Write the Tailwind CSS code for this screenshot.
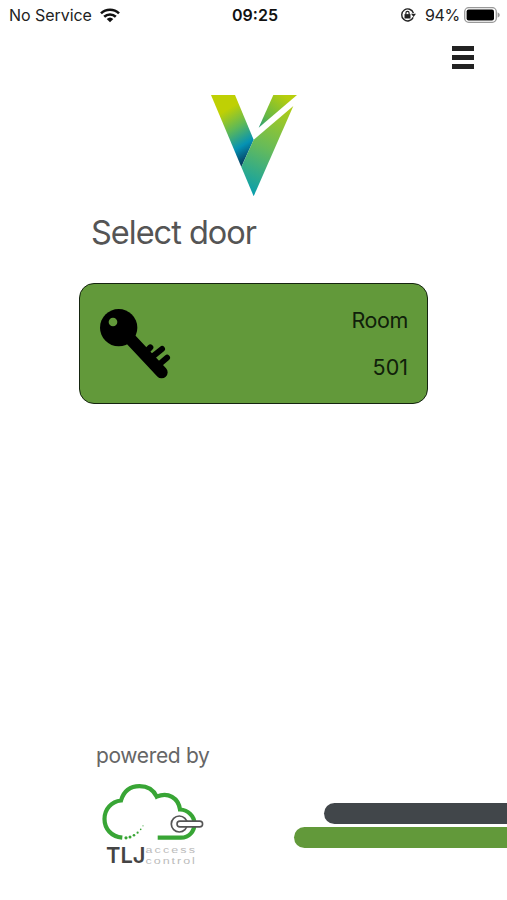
<!DOCTYPE html>
<html lang="en">
<head>
  <meta charset="UTF-8" />
  <meta name="viewport" content="width=device-width, initial-scale=1" />
  <title>Select door</title>
  <script src="https://cdn.jsdelivr.net/npm/@tailwindcss/browser@4"></script>
</head>
<body class="bg-white font-['Inter',sans-serif] w-full h-[900px] flex flex-col overflow-hidden">

  <!-- Status bar -->
  <header class="h-[30px] grid grid-cols-3 items-center pl-[9px] pr-[7px] text-[16px] leading-[30px] text-[#222]">
    <div class="flex items-center gap-2">
      <span class="whitespace-nowrap tracking-[-0.05px]">No Service</span>
      <svg class="w-5 h-[15px]" viewBox="0 0 20 15" fill="none" stroke="#111" stroke-width="2.6">
        <path d="M1 5.4a13 13 0 0 1 18 0M4.2 8.8a8.4 8.4 0 0 1 11.6 0" />
        <path d="M10 14.2 6.7 11a4.8 4.8 0 0 1 6.6 0z" fill="#111" stroke="none" />
      </svg>
    </div>
    <div class="pl-px text-center font-semibold text-[#111]">09:25</div>
    <div class="flex items-center justify-end">
      <svg class="w-4 h-4 mr-[9px]" viewBox="0 0 16 16" fill="none" stroke="#222" stroke-width="1.4">
        <path d="M13.2 10.4A6 6 0 1 1 13.4 6" />
        <path d="M11 6.8h5L13.6 10z" fill="#222" stroke="none" />
        <path d="M4.5 7.1h6v4.4h-6z" fill="#222" stroke="none" />
        <path d="M5.9 7.6V6a1.6 1.6 0 0 1 3.2 0v1.6" stroke-width="1.2" />
      </svg>
      <span class="mr-1 tracking-[-0.3px]">94%</span>
      <svg class="w-9 h-4" viewBox="0 0 36 16">
        <rect x=".7" y=".7" width="31.6" height="14.6" rx="4" fill="none" stroke="#999" stroke-width="1.3" />
        <rect x="2.6" y="2.6" width="27.4" height="10.8" rx="2" fill="#000" />
        <path d="M33.6 5.3q2.2 1 2.2 2.7t-2.2 2.7z" fill="#999" />
      </svg>
    </div>
  </header>

  <!-- Menu -->
  <nav class="flex justify-end pt-4 pr-[33px]">
    <button class="w-[22px] flex flex-col gap-1" aria-label="Menu">
      <span class="h-[5px] bg-[#222]"></span>
      <span class="h-[5px] bg-[#222]"></span>
      <span class="h-[5px] bg-[#222]"></span>
    </button>
  </nav>

  <!-- Logo -->
  <div class="flex justify-center mt-[26px]">
    <svg class="w-[87px] h-[102px]" viewBox="0 0 261 306">
      <defs>
        <linearGradient id="left" gradientUnits="userSpaceOnUse" x1="15" y1="15" x2="125" y2="200">
          <stop offset=".2" stop-color="#bfd004" />
          <stop offset=".48" stop-color="#5fb956" />
          <stop offset=".74" stop-color="#0592b4" />
          <stop offset="1" stop-color="#062e50" />
        </linearGradient>
        <linearGradient id="right" gradientUnits="userSpaceOnUse" x1="245" y1="30" x2="125" y2="300">
          <stop offset="0" stop-color="#b4cd12" />
          <stop offset=".5" stop-color="#67bb59" />
          <stop offset="1" stop-color="#079eae" />
        </linearGradient>
        <linearGradient id="tip" gradientUnits="userSpaceOnUse" x1="220" y1="0" x2="145" y2="98">
          <stop offset="0" stop-color="#b7ce0c" />
          <stop offset=".65" stop-color="#66b846" />
          <stop offset="1" stop-color="#239b7b" />
        </linearGradient>
      </defs>
      <path d="M3 0h72l56 134-37 82z" fill="url(#left)" />
      <path d="M131 134 250 33 131 304 94 216z" fill="url(#right)" />
      <path d="M190 0h71L146 98z" fill="url(#tip)" />
    </svg>
  </div>

  <main class="px-[79px]">
    <h1 class="mt-3 ml-3 text-[32.5px] leading-[48px] tracking-[-1px] text-[#555]">Select door</h1>

    <button class="mt-[26px] w-[349px] h-[121px] flex justify-between items-start rounded-[15px] border border-[#152410] bg-[#62993a] pl-[18px] pr-[19px] pt-[23px]">
      <!-- Key -->
      <svg class="w-[74px] h-[74px]" viewBox="38 35 222 222" fill="none" stroke="#000" stroke-linecap="round">
        <path d="M125 120 229 231" stroke-width="36" />
        <path d="M174 178l21-22M194 190l36-29M217 211l28-24" stroke-width="18" />
        <circle cx="100" cy="97" r="56" fill="#000" stroke="none" />
        <circle cx="83" cy="80" r="13" fill="#62993a" stroke="none" />
      </svg>
      <span class="flex flex-col items-end text-[21.5px] leading-[47px] -mt-[10px] tracking-[-0.4px] text-[#10200a]">
        <span>Room</span>
        <span class="tracking-normal">501</span>
      </span>
    </button>
  </main>

  <footer class="mt-auto h-[160px] flex justify-between">
    <div class="pl-[96px] w-[213px]">
      <p class="pt-px text-[21px] leading-[29px] tracking-[-0.35px] text-[#666] whitespace-nowrap">powered by</p>
      <!-- Cloud with door handle -->
      <svg class="mt-[10px] ml-1 w-[110px] h-[90px]" viewBox="0 0 110 90" fill="none">
        <path d="M22.3 57.7C11 56.5 4.5 48.5 4.5 39C4.5 29 11.5 21.5 21 20.5C24 10.5 31 6.2 39.5 6.2C47 6.2 53.3 9.5 56.7 16.7C68 11.5 78.5 18 80 29.5C88 30 94.5 36 94.5 43.8C94.5 51.5 89 57.7 81 57.7H57.7" stroke="#38a535" stroke-width="4.2" />
        <g fill="#38a535">
          <circle cx="26" cy="57.8" r="1.6" />
          <circle cx="30" cy="57.1" r="1.5" />
          <circle cx="34" cy="55.3" r="1.3" />
          <circle cx="37.6" cy="52.7" r="1.1" />
          <circle cx="40.7" cy="49.4" r=".8" />
          <circle cx="43" cy="45.8" r=".6" />
        </g>
        <circle cx="79.3" cy="44" r="8" fill="#fff" stroke="#555" stroke-width="1.7" />
        <rect x="77" y="41.1" width="25.6" height="5.8" rx="2.9" fill="#fff" stroke="#555" stroke-width="1.6" />
        <text x="6" y="83" textLength="39.5" lengthAdjust="spacingAndGlyphs" font-size="22" font-weight="600" fill="#444">TLJ</text>
        <g font-family="'Liberation Sans',sans-serif" font-size="9.6" fill="#bbb">
          <text transform="translate(45.5 72.8) scale(1.3 1)" textLength="38">access</text>
          <text transform="translate(45.5 83.5) scale(1.3 1)" textLength="38">control</text>
        </g>
      </svg>
    </div>

    <div class="w-[213px] pt-[63px] flex flex-col items-end gap-[3px]">
      <div class="w-[183px] h-[21px] rounded-l-full bg-[#41464a]"></div>
      <div class="w-[213px] h-[21px] rounded-l-full bg-[#62993a]"></div>
    </div>
  </footer>

</body>
</html>
